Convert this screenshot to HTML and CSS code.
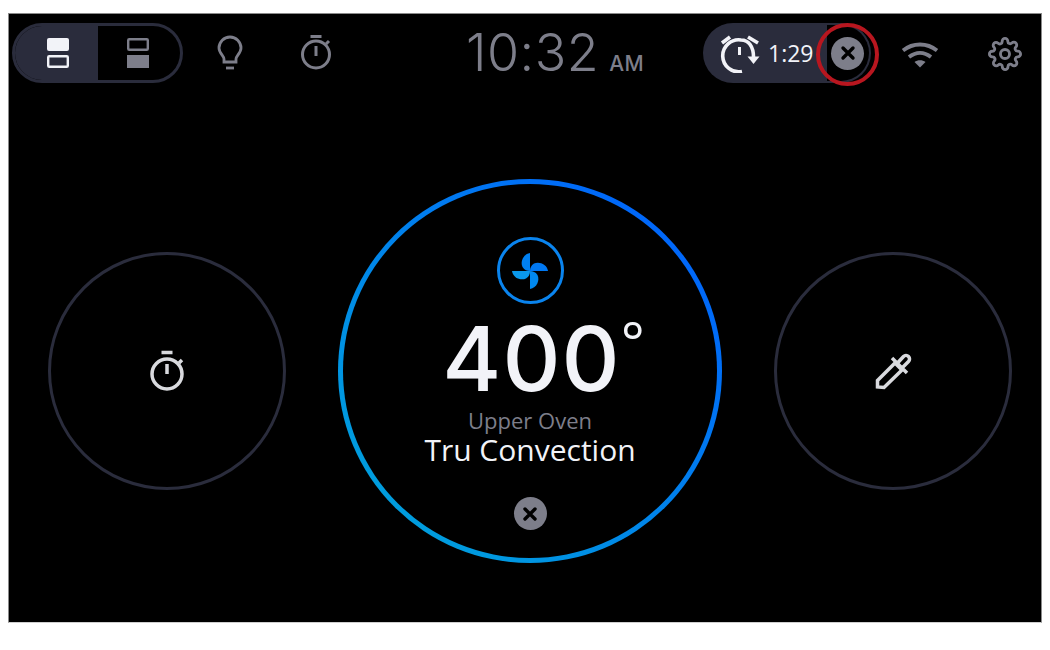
FILE: index.html
```html
<!DOCTYPE html>
<html lang="en">
<head>
    <meta charset="UTF-8">
    <title>Oven Control</title>
    <link rel="stylesheet" href="styles.css">
</head>
<body>
    <div class="screen">
        <header class="topbar">
            <div class="oven-switch">
                <div class="oven-seg active">
                    <svg width="24" height="32" viewBox="0 0 24 32"><rect x="1" y="1" width="22" height="13" rx="2" fill="#f2f3f8"/><rect x="2.200" y="19.200" width="19.600" height="10.600" rx="1" fill="none" stroke="#f2f3f8" stroke-width="2.400"/></svg>
                </div>
                <div class="oven-seg lower">
                    <svg width="24" height="32" viewBox="0 0 24 32"><rect x="2.200" y="2.200" width="19.600" height="10.600" rx="1" fill="none" stroke="#7d7e8a" stroke-width="2.400"/><rect x="1" y="18" width="22" height="13" fill="#7d7e8a"/></svg>
                </div>
            </div>
            <div class="icon-btn bulb">
                <svg width="40" height="40" viewBox="0 0 40 40" fill="none" stroke="#7d7e8a" stroke-width="2.800"><path d="M14 29h12v-3c0-3 5-6 5-11a11 11 0 1 0-22 0c0 5 5 8 5 11z"/><path d="M16 35h8"/></svg>
            </div>
            <div class="icon-btn timer">
                <svg width="40" height="40" viewBox="0 0 40 40" fill="none" stroke="#7d7e8a" stroke-width="3"><circle cx="20" cy="21.500" r="13.500"/><path d="M14.500 3.500h11M20 13v10M30 11l3-3"/></svg>
            </div>
            <div class="clock">10:32<span class="ampm">AM</span></div>
            <div class="alarm">
                <div class="alarm-fill">
                    <svg width="42" height="40" viewBox="0 0 42 40" fill="none" stroke="#f2f3f8" stroke-width="3.600"><path d="M3 10l8-6M29 4l10 6"/><path d="M23 38.500A16 16 0 1 1 22 7C30 7 34.500 14 34.500 24"/><path d="M20.500 14v8" stroke-width="3"/><path d="M28.500 23.500h12L34.500 31z" fill="#f2f3f8" stroke="none"/></svg>
                    <span class="alarm-time">1:29</span>
                </div>
                <div class="alarm-end">
                    <div class="close-btn">
                        <svg width="16" height="16" viewBox="0 0 16 16" stroke="#000" stroke-width="3.400" stroke-linecap="round"><path d="M3 3l10 10M13 3L3 13"/></svg>
                    </div>
                </div>
                <div class="highlight"></div>
            </div>
            <div class="icon-btn wifi">
                <svg width="40" height="28" viewBox="0 0 40 28" fill="none" stroke="#7d7e8a" stroke-width="3.800"><path d="M3 9.500c10-8 24-8 34 0"/><path d="M9 16c7-5.500 15-5.500 22 0"/><path d="M20 26.500l-5.500-5.500c3-2.500 8-2.500 11 0z" fill="#7d7e8a" stroke="none"/></svg>
            </div>
            <div class="icon-btn gear">
                <svg width="34" height="34" viewBox="0 0 24 24" fill="none" stroke="#7d7e8a" stroke-width="2"><circle cx="12" cy="12" r="3.200"/><path d="M19.400 15a1.650 1.650 0 0 0 .33 1.820l.06.06a2 2 0 1 1-2.830 2.830l-.06-.06a1.650 1.650 0 0 0-2.800 1.170V21a2 2 0 1 1-4 0v-.09A1.650 1.650 0 0 0 7.300 19.700l-.06.06a2 2 0 1 1-2.830-2.830l.06-.06a1.650 1.650 0 0 0-1.170-2.800H3a2 2 0 1 1 0-4h.09A1.650 1.650 0 0 0 4.300 7.300l-.06-.06a2 2 0 1 1 2.830-2.830l.06.06a1.650 1.650 0 0 0 1.820.33H9a1.650 1.650 0 0 0 1-1.510V3a2 2 0 1 1 4 0v.09a1.650 1.650 0 0 0 2.800 1.170l.06-.06a2 2 0 1 1 2.830 2.830l-.06.06a1.650 1.650 0 0 0-.33 1.820V9a1.650 1.650 0 0 0 1.510 1H21a2 2 0 1 1 0 4h-.09a1.650 1.650 0 0 0-1.510 1z"/></svg>
            </div>
        </header>
        <main class="dials">
            <div class="side-dial">
                <svg width="40" height="42" viewBox="0 0 40 42" fill="none" stroke="#d9dade" stroke-width="3.500"><circle cx="20" cy="24" r="15"/><path d="M14.500 2.500h11M20 14v10M32 13l3-3"/></svg>
            </div>
            <div class="main-dial">
                <div class="fan">
                    <svg width="38" height="38" viewBox="0 0 38 38">
                        <path fill="#0078f2" d="M19 19L37 19C36 12 28 9 23 11.500C20 13.500 19 16 19 19z"/>
                        <path fill="#0080f2" d="M19 19L37 19C36 12 28 9 23 11.500C20 13.500 19 16 19 19z" transform="rotate(-90 19 19)"/>
                        <path fill="#0a98ea" d="M19 19L37 19C36 12 28 9 23 11.500C20 13.500 19 16 19 19z" transform="rotate(180 19 19)"/>
                        <path fill="#0088ee" d="M19 19L37 19C36 12 28 9 23 11.500C20 13.500 19 16 19 19z" transform="rotate(90 19 19)"/>
                    </svg>
                </div>
                <div class="temp">400<span class="degree">°</span></div>
                <div class="oven-name">Upper Oven</div>
                <div class="mode">Tru Convection</div>
                <div class="close-btn cancel">
                    <svg width="16" height="16" viewBox="0 0 16 16" stroke="#000" stroke-width="3.400" stroke-linecap="round"><path d="M3 3l10 10M13 3L3 13"/></svg>
                </div>
            </div>
            <div class="side-dial">
                <svg width="40" height="40" viewBox="0 0 40 40" fill="none" stroke="#d9dade" stroke-width="3.500"><path d="M4.500 36V29.500L22 12l7 7L11 36.500z"/><path d="M19 7l15 15M24.500 12l6-6.500a3.500 3.500 0 0 1 5 5l-6.500 6.500"/></svg>
            </div>
        </main>
    </div>
</body>
</html>
```

FILE: styles.css
```css
* {
    margin: 0;
    padding: 0;
    box-sizing: border-box;
}
body {
    width: 1050px;
    height: 650px;
    background: #fff;
    padding: 13px 8px 27px 8px;
    font-family: "Open Sans", "Noto Sans", sans-serif;
    overflow: hidden;
}
.screen {
    width: 1034px;
    height: 610px;
    background: #000;
    border-left: 1px solid #8a8a8a;
    border-top: 1px solid #8a8a8a;
    border-right: 1px solid #8a8a8a;
    border-bottom: 1px solid #cfcfcf;
    display: flex;
    flex-direction: column;
}
.topbar {
    height: 106px;
    padding: 9px 0 0 3px;
    display: flex;
    align-items: flex-start;
}
.oven-switch {
    width: 171px;
    height: 60px;
    border: 3px solid #2a2c3c;
    border-radius: 30px;
    display: flex;
    overflow: hidden;
}
.oven-seg {
    flex: 1;
    display: flex;
    align-items: center;
    justify-content: center;
}
.oven-seg.active {
    flex: none;
    width: 83px;
    padding-left: 3px;
    background: #2a2c3c;
}
.oven-seg.lower {
    padding-right: 3px;
}
.icon-btn {
    width: 40px;
    height: 60px;
    display: flex;
    align-items: center;
    justify-content: center;
}
.bulb { margin-left: 27px; }
.timer { margin-left: 46px; }
.clock {
    margin-left: 129px;
    width: 238px;
    height: 60px;
    padding-left: 1px;
    font-family: Inter, sans-serif;
    font-weight: 300;
    font-size: 52px;
    letter-spacing: 0.5px;
    line-height: 60px;
    color: #7d7e8a;
    white-space: nowrap;
}
.ampm {
    font-size: 21px;
    font-weight: 500;
    letter-spacing: 0.5px;
    margin-left: 10px;
}
.alarm {
    position: relative;
    width: 168px;
    height: 60px;
    display: flex;
}
.alarm-fill {
    width: 124px;
    background: #2a2c3c;
    border-radius: 30px 0 0 30px;
    display: flex;
    align-items: center;
    padding-left: 16px;
    color: #f2f3f8;
}
.alarm-time {
    font-size: 23px;
    margin-left: 7px;
}
.alarm-end {
    flex: 1;
    border: 2px solid #2a2c3c;
    border-left: 0;
    border-radius: 0 30px 30px 0;
    display: flex;
    align-items: center;
    padding-left: 4px;
}
.close-btn {
    width: 33px;
    height: 33px;
    border-radius: 50%;
    background: #7d7e8a;
    display: flex;
    align-items: center;
    justify-content: center;
}
/* red annotation ring drawn over the cancel button */
.highlight {
    position: absolute;
    left: 113px;
    top: 0;
    width: 63px;
    height: 63px;
    border: 4px solid #b8161f;
    border-radius: 50%;
}
.wifi {
    margin-left: 29px;
    padding-top: 3px;
}
.gear {
    margin-left: 45px;
    padding-top: 2px;
}
.dials {
    flex: 1;
    display: flex;
    align-items: center;
    padding-left: 39px;
    gap: 52px;
}
.side-dial {
    width: 238px;
    height: 238px;
    border: 3.500px solid #2a2c3c;
    border-radius: 50%;
    display: flex;
    align-items: center;
    justify-content: center;
}
.main-dial {
    width: 384px;
    height: 384px;
    border: 5px solid transparent;
    border-radius: 50%;
    background: linear-gradient(#000, #000) padding-box, linear-gradient(to top right, #00a8d8, #005cff) border-box;
    display: flex;
    flex-direction: column;
    align-items: center;
    padding-top: 53px;
}
.fan {
    flex: none;
    width: 67px;
    height: 67px;
    border: 3.500px solid #0a84ee;
    border-radius: 50%;
    display: flex;
    align-items: center;
    justify-content: center;
}
.temp {
    position: relative;
    flex: none;
    font-family: Inter, sans-serif;
    font-size: 90px;
    font-weight: 500;
    letter-spacing: 1px;
    line-height: 96px;
    height: 96px;
    margin-top: 7px;
    margin-left: 3px;
    color: #f2f3f8;
}
/* degree mark hangs off the digits so they stay centred */
.degree {
    position: absolute;
    left: 100%;
    top: -5px;
    font-family: "Open Sans", sans-serif;
    font-size: 56px;
    font-weight: 400;
    line-height: 70px;
}
.oven-name {
    flex: none;
    font-size: 22px;
    font-weight: 500;
    line-height: 26px;
    color: #7d7e8a;
}
.mode {
    flex: none;
    font-size: 30px;
    line-height: 36px;
    margin-top: -1px;
    color: #f2f3f8;
}
.cancel {
    flex: none;
    margin-top: 29px;
}
```
